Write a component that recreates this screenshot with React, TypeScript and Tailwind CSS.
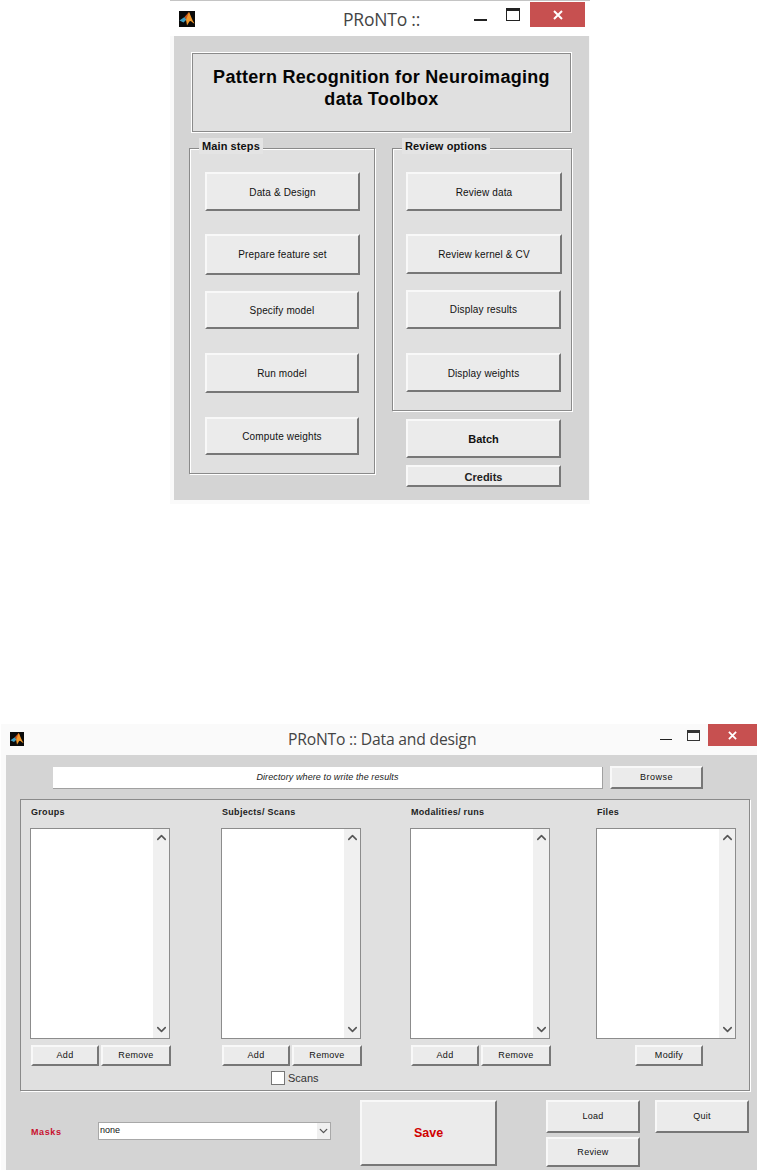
import type { ReactNode } from 'react';
import { ChevronDown, ChevronUp } from 'lucide-react';

const FONT = "font-['Liberation_Sans',Arial,sans-serif]";

function Btn({ label, className, textClass = 'text-[10px] tracking-[0.15px] text-[#111]' }: { label: string; className: string; textClass?: string }) {
  return (
    <div
      className={`flex shrink-0 items-center justify-center border-t-2 border-l-2 border-r-2 border-b-2 border-t-[#f8f8f8] border-l-[#f8f8f8] border-r-[#777] border-b-[#777] bg-[#ebebeb] ${textClass} ${className}`}
    >
      {label}
    </div>
  );
}

function MatlabIcon({ className }: { className: string }) {
  return (
    <svg viewBox="0 0 16 16" className={className}>
      <rect width="16" height="16" fill="#0a0a0a" />
      <path d="M0.5 9.5 5.5 6l2 2.5-3 3z" fill="#3f9fc4" />
      <path d="M5.5 6 10 1l1 3-3.500 5z" fill="#c9541a" />
      <path d="M10 1c1.500 3 3 8 5.500 11.500-2-.5-3-2.500-4.500-2.500-1 .5-2 3-3 4.500-.3-2-.6-4-1-5.500z" fill="#f0972a" />
    </svg>
  );
}

function WindowControls({ small }: { small?: boolean }) {
  return small ? (
    <div className="flex items-start">
      <div className="mt-[15px] h-px w-3 bg-[#222]" />
      <div className="ml-[15px] mt-[6px] h-[11px] w-[13px] border border-[#333] border-t-[3px]" />
      <div className="ml-2 flex h-[22px] w-[49px] items-center justify-center bg-[#c75050]">
        <svg viewBox="0 0 10 10" className="h-[9px] w-[9px]">
          <path d="M1 1l8 8M9 1l-8 8" stroke="#fff" strokeWidth="2" />
        </svg>
      </div>
    </div>
  ) : (
    <div className="flex items-start">
      <div className="mt-[18px] h-0.5 w-[13px] bg-[#222]" />
      <div className="ml-[19px] mt-[7px] h-[13px] w-[14px] border border-[#222] border-t-[3px]" />
      <div className="ml-2.5 mt-px flex h-[25px] w-[55px] items-center justify-center bg-[#c75050]">
        <svg viewBox="0 0 10 10" className="h-[10px] w-[10px]">
          <path d="M1 1l8 8M9 1l-8 8" stroke="#fff" strokeWidth="2" />
        </svg>
      </div>
    </div>
  );
}

function Panel({ legend, className, children }: { legend: string; className: string; children: ReactNode }) {
  return (
    <div className={`relative shrink-0 border border-[#8a8a8a] bg-[#e0e0e0] shadow-[1px_1px_0_#fff,inset_1px_1px_0_#fff] ${className}`}>
      <span className="absolute -top-[11px] left-[9px] bg-[#e4e4e4] px-[3px] text-[11px] font-bold leading-[16px] tracking-[0.1px] text-[#111]">{legend}</span>
      {children}
    </div>
  );
}

function ListBox() {
  return (
    <div className="flex h-[211px] w-[140px] justify-end border border-[#8c8c8c] bg-white">
      <div className="flex w-4 flex-col items-center justify-between bg-[#f0f0f0] pb-[1px] pt-[1px]">
        <ChevronUp size={15} strokeWidth={2.5} color="#555" />
        <ChevronDown size={15} strokeWidth={2.5} color="#555" />
      </div>
    </div>
  );
}

function ListColumn({ title, className, children }: { title: string; className: string; children: ReactNode }) {
  return (
    <div className={`flex w-[142px] shrink-0 flex-col ${className}`}>
      <div className="h-[22px] pl-px text-[9px] font-bold leading-[12px] tracking-[0.3px] text-[#222]">{title}</div>
      <ListBox />
      {children}
    </div>
  );
}

const SMALL = 'text-[9px] tracking-[0.3px] text-[#111]';

function AddRemove() {
  return (
    <div className="ml-px mt-1.5 flex gap-0.5">
      <Btn label="Add" className="h-[21px] w-[68px]" textClass={SMALL} />
      <Btn label="Remove" className="h-[21px] w-[70px]" textClass={SMALL} />
    </div>
  );
}

export default function App() {
  return (
    <div className={`h-[1176px] w-[761px] overflow-hidden bg-white ${FONT}`}>
      {/* PRoNTo main window */}
      <div className="ml-[170px] h-[504px] w-[420px] border-t border-[#c4c4c4] bg-[#fafafa]">
        <div className="flex h-[35px] bg-white">
          <MatlabIcon className="ml-[9px] mt-[10px] h-4 w-4" />
          <div className="ml-[148px] mt-[6px] w-[90px] font-['Open_Sans',sans-serif] text-[17.500px] leading-[24px] tracking-[-0.2px] text-[#444]">PRoNTo ::</div>
          <div className="ml-[41px]"><WindowControls /></div>
        </div>
        <div className="ml-1 h-[464px] w-[415px] bg-[#d4d4d4] pl-[15px] pt-[17px]">
          <div className="ml-[3px] flex h-[79px] w-[379px] flex-col items-center border border-[#8a8a8a] bg-[#e0e0e0] pt-[13px] text-center text-[18px] font-bold leading-[21.500px] tracking-[0.3px] text-[#050505] shadow-[0_0_0_1px_#fff]">
            <div>Pattern Recognition for Neuroimaging</div>
            <div>data Toolbox</div>
          </div>
          <div className="mt-[16px] flex items-start">
            <Panel legend="Main steps" className="h-[326px] w-[186px] pl-[15px] pt-[23px]">
              <Btn label="Data & Design" className="h-[39px] w-[155px] pt-px" />
              <Btn label="Prepare feature set" className="mt-[23px] h-[41px] w-[155px]" />
              <Btn label="Specify model" className="mt-[16px] h-[38px] w-[154px]" />
              <Btn label="Run model" className="mt-[24px] h-[40px] w-[154px] pt-px" />
              <Btn label="Compute weights" className="mt-[24px] h-[38px] w-[154px]" />
            </Panel>
            <div className="ml-[17px] flex flex-col">
              <Panel legend="Review options" className="h-[263px] w-[180px] pl-[13px] pt-[23px]">
                <Btn label="Review data" className="h-[39px] w-[156px] pt-px" />
                <Btn label="Review kernel & CV" className="mt-[23px] h-[40px] w-[156px]" />
                <Btn label="Display results" className="mt-[16px] h-[39px] w-[155px]" />
                <Btn label="Display weights" className="mt-[24px] h-[39px] w-[155px] pt-px" />
              </Panel>
              <Btn label="Batch" className="ml-[14px] mt-[8px] h-[39px] w-[155px] pt-px" textClass="text-[11px] font-bold text-[#111]" />
              <Btn label="Credits" className="ml-[14px] mt-[7px] h-[22px] w-[155px] overflow-hidden pt-[3px]" textClass="text-[11px] font-bold text-[#222]" />
            </div>
          </div>
        </div>
      </div>

      {/* Data and design window */}
      <div className="ml-[1px] mt-[220px] w-[756px] bg-[#fafafa]">
        <div className="flex h-[31px]">
          <MatlabIcon className="ml-[9px] mt-[8px] h-[14px] w-[14px]" />
          <div className="ml-[264px] mt-[3px] w-[300px] font-['Open_Sans',sans-serif] text-[15.700px] leading-[24px] tracking-[-0.2px] text-[#444]">PRoNTo :: Data and design</div>
          <div className="ml-[72px]"><WindowControls small /></div>
        </div>
        <div className="ml-[5px] h-[415px] w-[751px] bg-[#d4d4d4] pt-[11px]">
          <div className="flex items-center">
            <div className="ml-[47px] flex h-[22px] w-[550px] items-center justify-center border-b border-r border-[#a0a0a0] bg-white pt-px text-[9px] italic tracking-[0.1px] text-[#222]">
              Directory where to write the results
            </div>
            <Btn label="Browse" className="ml-[7px] h-[23px] w-[93px] pt-px" textClass="text-[9px] tracking-[0.5px] text-[#111]" />
          </div>
          <div className="ml-[14px] mt-[10px] flex h-[292px] w-[730px] border border-[#8a8a8a] bg-[#e0e0e0] pl-[9px] pt-[6px] shadow-[1px_1px_0_#fff]">
            <ListColumn title="Groups" className="">
              <AddRemove />
            </ListColumn>
            <ListColumn title="Subjects/ Scans" className="ml-[49px]">
              <AddRemove />
              <div className="mt-[5px] flex items-center pl-[50px] text-[11px] leading-[14px] text-[#333]">
                <div className="mr-[3px] h-[14px] w-[14px] border border-[#777] bg-white" />
                Scans
              </div>
            </ListColumn>
            <ListColumn title="Modalities/ runs" className="ml-[47px]">
              <AddRemove />
            </ListColumn>
            <ListColumn title="Files" className="ml-[44px]">
              <Btn label="Modify" className="ml-[39px] mt-1.5 h-[21px] w-[68px]" textClass={SMALL} />
            </ListColumn>
          </div>
          <div className="mt-[9px] flex items-start">
            <div className="ml-[25px] mt-[25px] w-[67px] text-[9px] font-bold leading-[14px] tracking-[0.6px] text-[#c8102e]">Masks</div>
            <div className="mt-[22px] flex h-[18px] w-[233px] items-center justify-between border border-[#a8a8a8] bg-white pl-px text-[9px] text-[#111]">
              none
              <div className="flex h-full w-[13px] items-center justify-center bg-[#f0f0f0]">
                <ChevronDown size={14} strokeWidth={2.5} color="#555" />
              </div>
            </div>
            <Btn label="Save" className="ml-[29px] h-[66px] w-[137px] pt-px" textClass="text-[12.500px] font-bold text-[#d00000]" />
            <div className="ml-[49px] flex flex-col gap-[4px]">
              <Btn label="Load" className="h-[33px] w-[94px] pt-px" textClass={SMALL} />
              <Btn label="Review" className="h-[30px] w-[94px] pt-[2px]" textClass={SMALL} />
            </div>
            <Btn label="Quit" className="ml-[15px] h-[33px] w-[94px] pt-px" textClass={SMALL} />
          </div>
        </div>
      </div>
    </div>
  );
}
